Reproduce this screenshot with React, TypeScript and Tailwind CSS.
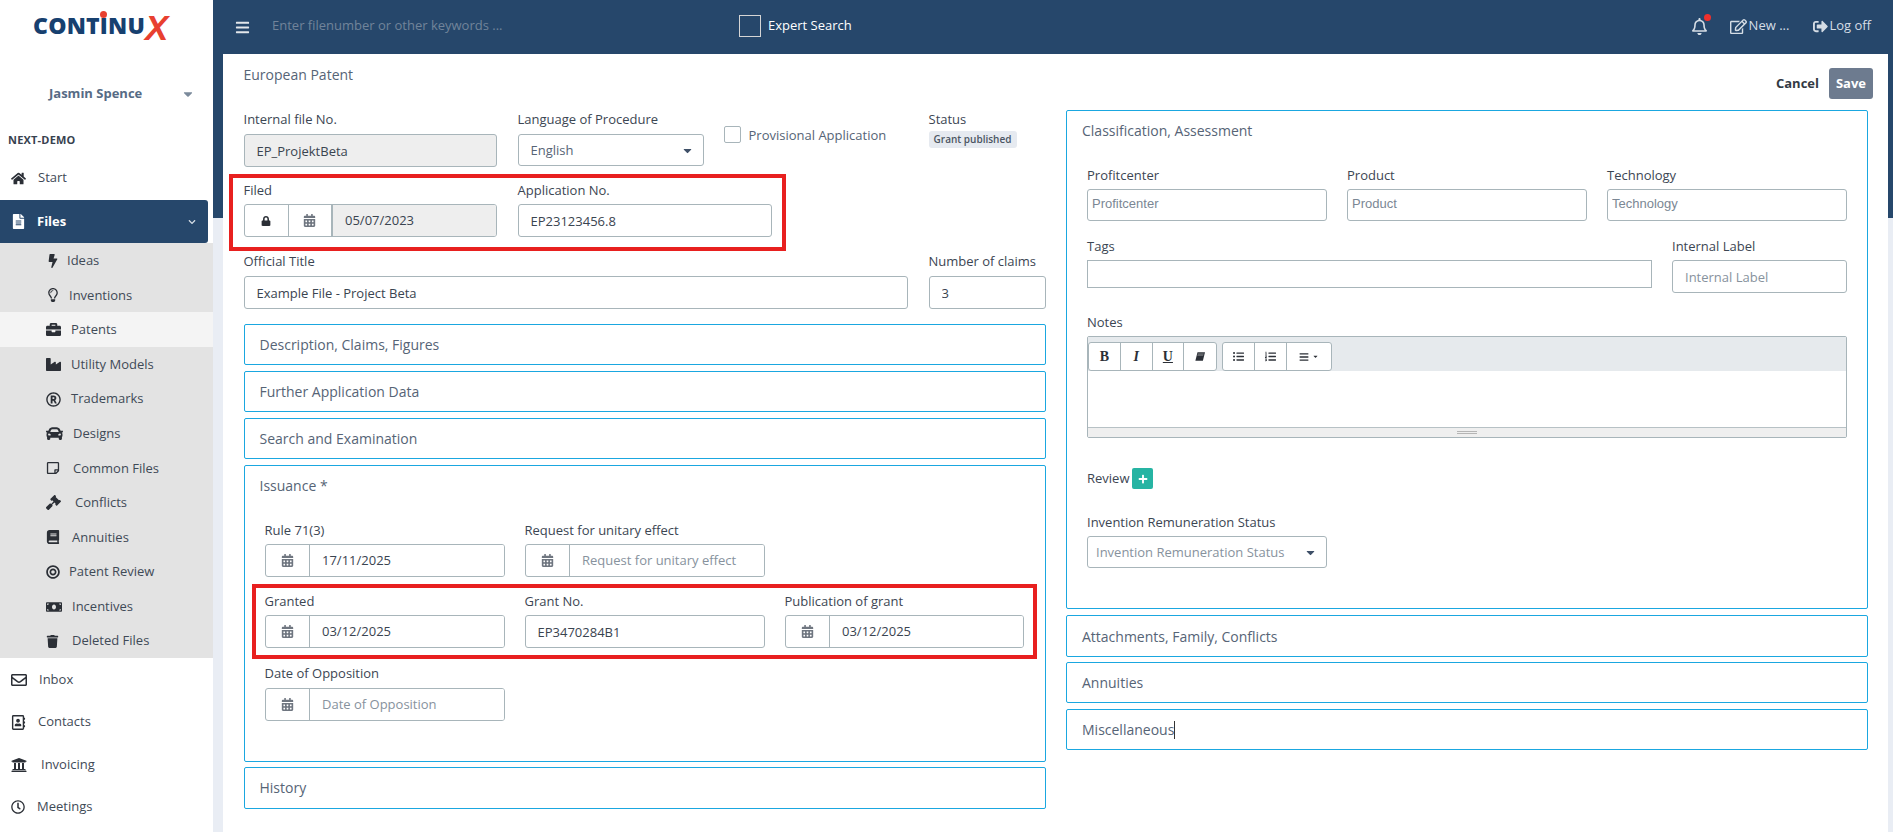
import React from "react";
import {
  FaHome, FaFileAlt, FaBolt, FaRegLightbulb, FaBriefcase, FaIndustry, FaRegRegistered, FaCar,
  FaRegStickyNote, FaGavel, FaBook, FaBullseye, FaMoneyBill, FaTrash, FaRegEnvelope, FaRegAddressBook,
  FaUniversity, FaRegClock, FaBars, FaRegBell, FaRegEdit, FaSignOutAlt, FaLock, FaCalendarAlt,
  FaCaretDown, FaChevronDown, FaPlus, FaListUl, FaListOl,
} from "react-icons/fa";

const subItems = [
  { label: "Ideas", icon: FaBolt, size: "text-[14px]", w: "w-[21px]" },
  { label: "Inventions", icon: FaRegLightbulb, size: "text-[14px]", w: "w-[23px]" },
  { label: "Patents", icon: FaBriefcase, size: "text-[15px]", w: "w-[25px]", active: true },
  { label: "Utility Models", icon: FaIndustry, size: "text-[15px]", w: "w-[25px]" },
  { label: "Trademarks", icon: FaRegRegistered, size: "text-[15px]", w: "w-[25px]" },
  { label: "Designs", icon: FaCar, size: "text-[17px]", w: "w-[27px]" },
  { label: "Common Files", icon: FaRegStickyNote, size: "text-[14px]", w: "w-[27px]" },
  { label: "Conflicts", icon: FaGavel, size: "text-[15px]", w: "w-[29px]" },
  { label: "Annuities", icon: FaBook, size: "text-[14px]", w: "w-[26px]" },
  { label: "Patent Review", icon: FaBullseye, size: "text-[14px]", w: "w-[23px]" },
  { label: "Incentives", icon: FaMoneyBill, size: "text-[16px]", w: "w-[26px]" },
  { label: "Deleted Files", icon: FaTrash, size: "text-[13px]", w: "w-[26px]" },
];

const bottomItems = [
  { label: "Inbox", icon: FaRegEnvelope, size: "text-[16px]", w: "w-[28px]", h: "h-[43px]" },
  { label: "Contacts", icon: FaRegAddressBook, size: "text-[15px]", w: "w-[27px]", h: "h-[42px]" },
  { label: "Invoicing", icon: FaUniversity, size: "text-[16px]", w: "w-[30px]", h: "h-[43px]" },
  { label: "Meetings", icon: FaRegClock, size: "text-[14px]", w: "w-[26px]", h: "h-[42px]" },
];

function Sidebar() {
  return (
    <aside className="w-[213px] h-full shrink-0 bg-white text-[13px] text-[#3f4a57]">
      <div className="relative h-[54px] flex items-start pl-[33px] pt-[11px]">
        <span className="font-extrabold text-[23px] leading-[28px] tracking-[0.2px] text-[#17406f]">CONTINU</span>
        <span className="font-['Liberation_Sans',sans-serif] font-bold italic text-[35px] leading-[28px] text-[#e8402f] ml-[0px] mt-[3px]">X</span>
        <span className="absolute left-[100px] top-[11px] w-[7px] h-[7px] rounded-full bg-[#e8402f]" />
      </div>
      <div className="h-[78px] flex items-center pl-[49px] pt-[2px] font-bold text-[#566b85]">
        <span className="w-[132px]">Jasmin Spence</span>
        <FaCaretDown className="text-[#7b8a9b] text-[14px]" />
      </div>
      <div className="h-[17px] pl-[8px] flex items-center font-bold text-[11px] tracking-[0.2px] text-[#37424f]">NEXT-DEMO</div>
      <div className="h-[51px] flex items-center pl-[11px] pt-[7px]">
        <span className="w-[27px]"><FaHome className="text-[15px] text-[#2b2f36]" /></span>
        <span>Start</span>
      </div>
      <div className="h-[43px] w-[208px] bg-[#26476b] rounded-r-[3px] flex items-center pl-[11px] text-white font-bold">
        <span className="w-[26px]"><FaFileAlt className="text-[15px]" /></span>
        <span className="flex-1">Files</span>
        <FaChevronDown className="text-[8px] text-[#d5dde5] mr-[12px]" />
      </div>
      <div className="bg-[#e3e3e3] h-[415px]">
        {subItems.map((s) => (
          <div key={s.label} className={"h-[34.58px] flex items-center pl-[46px] pt-[1px] " + (s.active ? "bg-[#f4f4f4]" : "")}>
            <span className={s.w + " shrink-0"}><s.icon className={s.size + " text-[#2b2f36]"} /></span>
            <span>{s.label}</span>
          </div>
        ))}
      </div>
      {bottomItems.map((s) => (
        <div key={s.label} className={s.h + " flex items-center pl-[11px]"}>
          <span className={s.w + " shrink-0"}><s.icon className={s.size + " text-[#2b2f36]"} /></span>
          <span>{s.label}</span>
        </div>
      ))}
    </aside>
  );
}

function TopBar() {
  return (
    <header className="relative h-[54px] flex items-center text-[13px] text-[#d5dde5]">
      <FaBars className="ml-[22px] text-[15px] text-[#e3e7eb]" />
      <span className="ml-[22px] -mt-[2px] w-[467px] text-[#71849a]">Enter filenumber or other keywords ...</span>
      <span className="w-[22px] h-[22px] border border-[#d5d5d5] -mt-[2px]" />
      <span className="ml-[7px] -mt-[2px] text-white">Expert Search</span>
      <div className="ml-auto -mt-[2px] flex items-center relative">
        <span className="relative">
          <FaRegBell className="text-[17px]" />
          <span className="absolute -right-[3px] -top-[4px] w-[7px] h-[7px] rounded-full bg-[#f0302c]" />
        </span>
        <FaRegEdit className="ml-[22px] text-[17px]" />
        <span className="ml-[2px]">New ...</span>
        <FaSignOutAlt className="ml-[24px] text-[15px]" />
        <span className="ml-[1px] mr-[22px]">Log off</span>
      </div>
    </header>
  );
}

const inputBase = "h-[33px] border border-[#a8b5ba] rounded-[3px] text-[13px] text-[#3a4450] placeholder:text-[#87929d] outline-none";

function Label({ children, up }: { children: React.ReactNode; up?: boolean }) {
  return (
    <div className={"h-[18px] text-[13px] leading-[18px] text-[#3c4653] whitespace-nowrap " + (up ? "-mt-[1px] mb-[6px]" : "mb-[5px]")}>
      {children}
    </div>
  );
}

function Text({ value, placeholder, disabled, className = "" }: { value?: string; placeholder?: string; disabled?: boolean; className?: string }) {
  return (
    <input
      readOnly
      defaultValue={value}
      placeholder={placeholder}
      className={inputBase + " block w-full px-[12px] " + (disabled ? "bg-[#eeeeee] " : "bg-white ") + className}
    />
  );
}

function DateInput({ value, placeholder, lock, disabled }: { value?: string; placeholder?: string; lock?: boolean; disabled?: boolean }) {
  return (
    <div className="h-[33px] flex border border-[#a8b5ba] rounded-[3px] overflow-hidden text-[13px]">
      {lock && (
        <span className="w-[44px] shrink-0 flex items-center justify-center border-r border-[#a8b5ba]">
          <FaLock className="text-[10px] text-[#2b2f36]" />
        </span>
      )}
      <span className={"w-[44.5px] shrink-0 flex items-center justify-center border-[#a8b5ba] " + (disabled ? "border-r-2" : "border-r")}>
        <FaCalendarAlt className="text-[13px] text-[#6f7680]" />
      </span>
      <input
        readOnly
        defaultValue={value}
        placeholder={placeholder}
        className={"min-w-0 flex-1 pl-[12px] text-[#3a4450] placeholder:text-[#87929d] outline-none " + (disabled ? "bg-[#eeeeee]" : "bg-white")}
      />
    </div>
  );
}

function Section({ title, className = "" }: { title: string; className?: string }) {
  return (
    <div className={"h-[41px] border border-[#1aa7e0] rounded-[2px] flex items-center pl-[15px] text-[14px] text-[#566476] " + className}>
      {title}
    </div>
  );
}

function Select({ value, muted }: { value: string; muted?: boolean }) {
  return (
    <div className={"h-[32px] border border-[#a8b5ba] rounded-[3px] flex items-center pl-[8px] pr-[9px] justify-between bg-white text-[13px] " + (muted ? "text-[#87929d]" : "text-[#566476]")}>
      <span className={muted ? "pt-[1px]" : "pl-[4px] pt-[2px]"}>{value}</span>
      <FaCaretDown className="text-[13px] text-[#3f5068]" />
    </div>
  );
}

function LeftColumn() {
  return (
    <div className="w-[802.5px] shrink-0">
      <div className="mt-[11px] h-[20px] text-[14px] leading-[20px] text-[#566476]">European Patent</div>
      <div className="mt-[26px] flex">
        <div className="w-[253px]">
          <Label up>Internal file No.</Label>
          <Text value="EP_ProjektBeta" disabled />
        </div>
        <div className="w-[186px] ml-[21px]">
          <Label up>Language of Procedure</Label>
          <Select value="English" />
        </div>
        <div className="ml-[20px] w-[205px] flex items-start pt-[15px]">
          <span className="w-[17px] h-[17px] border border-[#a8b5ba] rounded-[2px] shrink-0" />
          <span className="ml-[8px] text-[13px] leading-[18px] text-[#566476]">Provisional Application</span>
        </div>
        <div>
          <Label up>Status</Label>
          <span className="block -mt-[3px] w-[88px] h-[17px] rounded-[3px] bg-[#e6eaf0] text-center text-[10px] leading-[17px] font-semibold text-[#4b5563]">Grant published</span>
        </div>
      </div>
      <div className="mt-[7px] -ml-[15px] w-[557px] h-[77px] border-[4px] border-[#e8201f] pl-[11px] pt-[3px] flex">
        <div className="w-[253px]">
          <Label>Filed</Label>
          <DateInput value="05/07/2023" lock disabled />
        </div>
        <div className="w-[254px] ml-[21px]">
          <Label>Application No.</Label>
          <Text value="EP23123456.8" />
        </div>
      </div>
      <div className="mt-[2px] flex">
        <div className="w-[664px]">
          <Label up>Official Title</Label>
          <Text value="Example File - Project Beta" />
        </div>
        <div className="w-[117px] ml-[21px]">
          <Label up>Number of claims</Label>
          <Text value="3" />
        </div>
      </div>
      <Section title="Description, Claims, Figures" className="mt-[15px]" />
      <Section title="Further Application Data" className="mt-[6px]" />
      <Section title="Search and Examination" className="mt-[6px]" />
      <div className="mt-[6px] h-[297px] border border-[#1aa7e0] rounded-[2px]">
        <div className="h-[38px] flex items-center pl-[15px] text-[14px] text-[#566476]">Issuance *</div>
        <div className="mt-[17px] pl-[20px] grid grid-cols-[240px_240px] gap-x-[20px]">
          <div>
            <Label>Rule 71(3)</Label>
            <DateInput value="17/11/2025" />
          </div>
          <div>
            <Label>Request for unitary effect</Label>
            <DateInput placeholder="Request for unitary effect" />
          </div>
        </div>
        <div className="mt-[7px] ml-[7px] w-[785px] h-[75px] border-[4px] border-[#e8201f] pl-[9px] pt-[4px] grid grid-cols-[240px_240px_239px] gap-x-[20px]">
          <div>
            <Label>Granted</Label>
            <DateInput value="03/12/2025" />
          </div>
          <div>
            <Label>Grant No.</Label>
            <Text value="EP3470284B1" />
          </div>
          <div>
            <Label>Publication of grant</Label>
            <DateInput value="03/12/2025" />
          </div>
        </div>
        <div className="mt-[6px] pl-[20px] w-[260px]">
          <Label up>Date of Opposition</Label>
          <DateInput placeholder="Date of Opposition" />
        </div>
      </div>
      <div className="mt-[5px] h-[42px] border border-[#1aa7e0] rounded-[2px] flex items-center pl-[15px] pb-[2px] text-[14px] text-[#566476]">History</div>
    </div>
  );
}

function ToolBtn({ children, className = "" }: { children: React.ReactNode; className?: string }) {
  return <span className={"h-full flex items-center justify-center border-r last:border-r-0 border-[#a8b5ba] text-[#2b2f36] " + className}>{children}</span>;
}

function ArialInput({ placeholder }: { placeholder: string }) {
  return (
    <input
      readOnly
      placeholder={placeholder}
      className="block w-full h-[32px] border border-[#a8b5ba] rounded-[3px] pl-[4px] pb-[3px] font-['Liberation_Sans',sans-serif] text-[13px] placeholder:text-[#7b8794] outline-none"
    />
  );
}

function RightColumn() {
  return (
    <div className="w-[802px] shrink-0 ml-[20px]">
      <div className="h-[56px] flex items-start justify-end pt-[14px] -mr-[5px]">
        <span className="mt-[6px] mr-[10px] text-[13px] font-bold text-[#333a44]">Cancel</span>
        <span className="w-[44px] h-[31px] rounded-[3px] bg-[#6d7b8f] text-white text-[13px] font-bold flex items-center justify-center">Save</span>
      </div>
      <div className="h-[499px] border border-[#1aa7e0] rounded-[2px] px-[20px]">
        <div className="-ml-[5px] h-[38px] flex items-center text-[14px] text-[#566476]">Classification, Assessment</div>
        <div className="mt-[17px] grid grid-cols-[240px_240px_240px] gap-x-[20px]">
          <div><Label>Profitcenter</Label><ArialInput placeholder="Profitcenter" /></div>
          <div><Label>Product</Label><ArialInput placeholder="Product" /></div>
          <div><Label>Technology</Label><ArialInput placeholder="Technology" /></div>
        </div>
        <div className="mt-[16px] flex items-start">
          <div className="w-[565px]">
            <Label>Tags</Label>
            <input readOnly className="block w-full h-[28px] border border-[#a8b5ba] outline-none" />
          </div>
          <div className="w-[175px] ml-[20px]">
            <Label>Internal Label</Label>
            <Text placeholder="Internal Label" />
          </div>
        </div>
        <div className="mt-[20px]"><Label>Notes</Label></div>
        <div className="mt-[1px] h-[102px] border border-[#a8b5ba] rounded-[2px] overflow-hidden flex flex-col">
          <div className="h-[34px] shrink-0 bg-[#e6eaed] flex items-end gap-[5px]">
            <div className="h-[29px] w-[129px] bg-white border border-[#a8b5ba] rounded-[3px] grid grid-cols-4">
              <ToolBtn><span className="font-['Liberation_Serif',serif] font-bold text-[14px]">B</span></ToolBtn>
              <ToolBtn><span className="font-['Liberation_Serif',serif] font-bold italic text-[14px]">I</span></ToolBtn>
              <ToolBtn><span className="font-['Liberation_Serif',serif] font-bold underline text-[14px]">U</span></ToolBtn>
              <ToolBtn>
                <svg viewBox="0 0 12 10" className="w-[10px] h-[9px]" fill="#2b2f36"><path d="M3 0h9L9.5 10H0.5z" /><path d="M3.6 1h7L9.7 4.5H2.7z" fill="#fff" opacity="0.25" /></svg>
              </ToolBtn>
            </div>
            <div className="h-[29px] w-[110px] bg-white border border-[#a8b5ba] rounded-[3px] grid grid-cols-[32px_32px_1fr]">
              <ToolBtn><FaListUl className="text-[11px]" /></ToolBtn>
              <ToolBtn><FaListOl className="text-[11px]" /></ToolBtn>
              <ToolBtn><FaBars className="text-[10px]" /><FaCaretDown className="text-[7px] ml-[3px]" /></ToolBtn>
            </div>
          </div>
          <div className="flex-1 bg-white" />
          <div className="h-[10px] shrink-0 bg-[#efefef] border-t border-[#b7c1c5] flex flex-col items-center justify-center gap-[1px]">
            <span className="w-[20px] h-px bg-[#b5b5b5]" />
            <span className="w-[20px] h-px bg-[#b5b5b5]" />
          </div>
        </div>
        <div className="mt-[30px] flex items-center text-[13px] text-[#3c4653]">
          <span>Review</span>
          <span className="ml-[3px] w-[21px] h-[21px] rounded-[2px] bg-[#26b4a3] flex items-center justify-center">
            <FaPlus className="text-[10px] text-white" />
          </span>
        </div>
        <div className="mt-[24px]">
          <Label>Invention Remuneration Status</Label>
          <div className="w-[240px]"><Select value="Invention Remuneration Status" muted /></div>
        </div>
      </div>
      <Section title="Attachments, Family, Conflicts" className="mt-[6px] h-[42px]" />
      <Section title="Annuities" className="mt-[5px]" />
      <div className="mt-[6px] h-[41px] border border-[#1aa7e0] rounded-[2px] flex items-center pl-[15px] text-[14px] text-[#566476]">
        Miscellaneous<span className="w-px h-[18px] bg-[#333]" />
      </div>
    </div>
  );
}

export default function App() {
  return (
    <div className="h-[832px] w-[1893px] overflow-hidden flex bg-white font-['Open_Sans',sans-serif]">
      <Sidebar />
      <main className="relative flex-1 h-full bg-[#e9edf4] flex flex-col">
        <div className="absolute inset-x-0 top-0 h-[218px] bg-[#26476b]" />
        <TopBar />
        <div className="relative flex-1 ml-[10px] mr-[5px] bg-white pl-[20.5px] flex items-start">
          <LeftColumn />
          <RightColumn />
        </div>
      </main>
    </div>
  );
}
